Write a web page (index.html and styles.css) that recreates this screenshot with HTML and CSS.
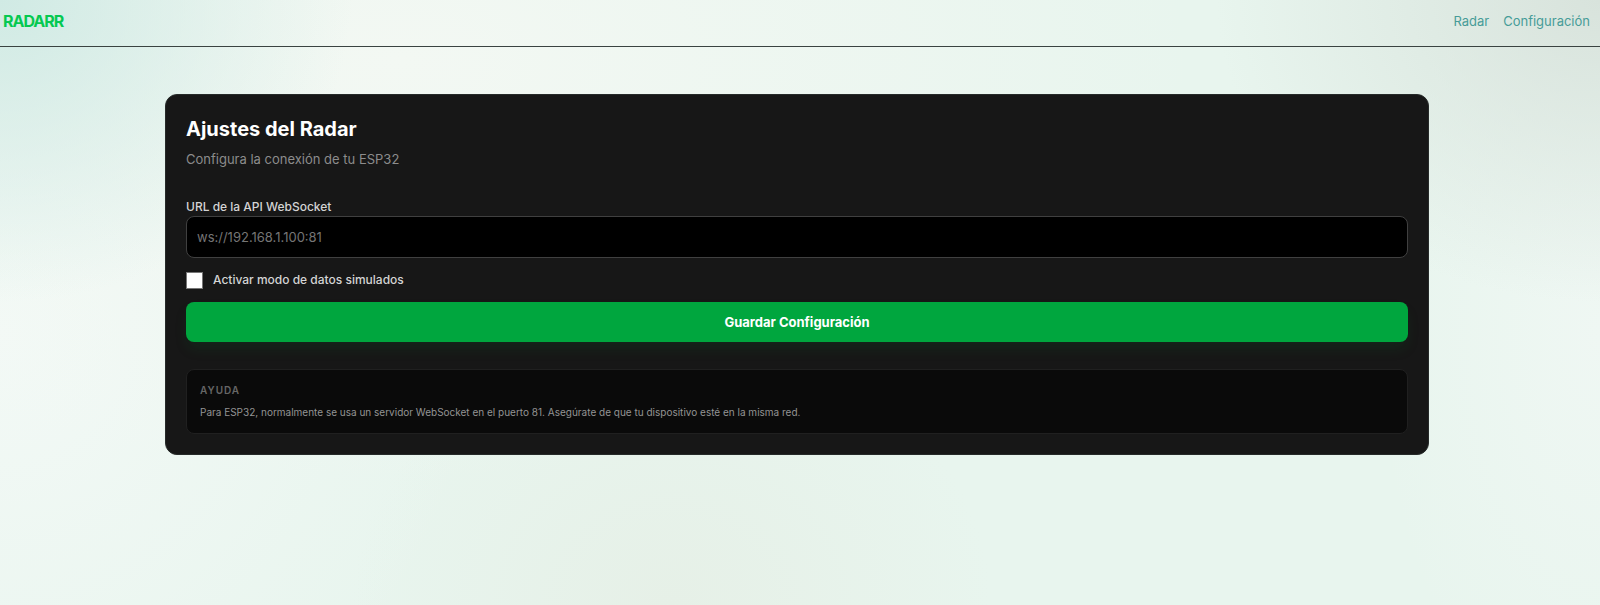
FILE: index.html
```
<!DOCTYPE html>
<html lang="es">
<head>
  <meta charset="UTF-8">
  <meta name="viewport" content="width=device-width, initial-scale=1.0">
  <title>Radarr - Configuración</title>
  <link rel="stylesheet" href="styles.css">
</head>
<body>

  <header class="navbar">
    <a class="logo" href="#">RADARR</a>
    <nav class="nav-links">
      <a href="#">Radar</a>
      <a href="#">Configuración</a>
    </nav>
  </header>

  <main>
    <section class="card">
      <h1>Ajustes del Radar</h1>
      <p class="subtitle">Configura la conexión de tu ESP32</p>

      <form class="settings-form">
        <div class="field">
          <label for="wsUrl">URL de la API WebSocket</label>
          <input type="text" id="wsUrl" placeholder="ws://192.168.1.100:81">
        </div>

        <div class="check-field">
          <input type="checkbox" id="mockData">
          <label for="mockData">Activar modo de datos simulados</label>
        </div>

        <button type="submit" class="save-button">Guardar Configuración</button>
      </form>

      <div class="help">
        <h2>Ayuda</h2>
        <p>Para ESP32, normalmente se usa un servidor WebSocket en el puerto 81. Asegúrate de que tu dispositivo esté en la misma red.</p>
      </div>
    </section>
  </main>

</body>
</html>
```

FILE: styles.css
```
* {
  box-sizing: border-box;
}

body {
  margin: 0;
  min-height: 100vh;
  font-family: Inter, "Liberation Sans", sans-serif;
  background:
    radial-gradient(ellipse 22% 50% at 0 0, #d0eae4, transparent),
    radial-gradient(ellipse 24% 50% at 100% 0, #d8e3dc, transparent),
    radial-gradient(ellipse 20% 45% at 42% 100%, #e6f0e7, transparent),
    radial-gradient(ellipse 50% 70% at 25% 10%, #f3f8f3, transparent),
    radial-gradient(ellipse 30% 80% at 0 55%, #f3f9f6, transparent),
    radial-gradient(ellipse 14% 70% at 100% 55%, #eff7f3, transparent),
    #e8f5ee;
}

h1, h2, p {
  margin: 0;
}

/* Navbar */
.navbar {
  display: flex;
  justify-content: space-between;
  align-items: center;
  height: 47px;
  padding: 0 10px 4px 3px;
  border-bottom: 1px solid #3a4341;
}

.logo {
  color: #05c951;
  font-size: 16px;
  font-weight: 700;
  letter-spacing: -1px;
  text-decoration: none;
}

.nav-links {
  display: flex;
  gap: 14px;
}

.nav-links a {
  color: #479c98;
  font-size: 13px;
  text-decoration: none;
}

/* Settings card */
main {
  padding: 47px 6px 47px 0;
}

.card {
  max-width: 1264px;
  margin: 0 auto;
  padding: 20px;
  background: #171717;
  border: 1px solid #262a29;
  border-radius: 12px;
}

h1 {
  color: #fff;
  font-size: 20px;
  font-weight: 700;
  line-height: 28px;
}

.subtitle {
  margin-top: 6px;
  color: #8c8c8c;
  font-size: 13px;
  line-height: 20px;
}

.settings-form {
  display: flex;
  flex-direction: column;
  gap: 13px;
  margin-top: 29px;
}

label {
  color: #d4d4d4;
  font-size: 12px;
  font-weight: 500;
  line-height: 18px;
}

.field {
  display: flex;
  flex-direction: column;
}

.field input {
  height: 42px;
  padding: 0 10px;
  color: #fff;
  background: #000;
  border: 1px solid #404040;
  border-radius: 8px;
  font: inherit;
  font-size: 13px;
}

.field input::placeholder {
  color: #757575;
}

.check-field {
  display: flex;
  align-items: center;
  gap: 10px;
}

.check-field input {
  appearance: none;
  width: 17px;
  height: 17px;
  margin: 0;
  background: #fff;
  border: 1px solid #767676;
}

.check-field input:checked {
  background: #00a63e;
}

.save-button {
  height: 40px;
  color: #fff;
  background: #00a63e;
  border: none;
  border-radius: 8px;
  box-shadow: 0 8px 14px -2px rgba(0, 120, 50, 0.15);
  font: inherit;
  font-size: 13px;
  font-weight: 700;
  cursor: pointer;
}

.help {
  margin-top: 27px;
  padding: 12px 13px;
  background: #0a0a0a;
  border: 1px solid #202020;
  border-radius: 8px;
}

.help h2 {
  color: #666;
  font-size: 10px;
  font-weight: 600;
  line-height: 16px;
  letter-spacing: 1px;
  text-transform: uppercase;
}

.help p {
  margin-top: 5px;
  color: #949494;
  font-size: 10px;
  line-height: 18px;
}
```
